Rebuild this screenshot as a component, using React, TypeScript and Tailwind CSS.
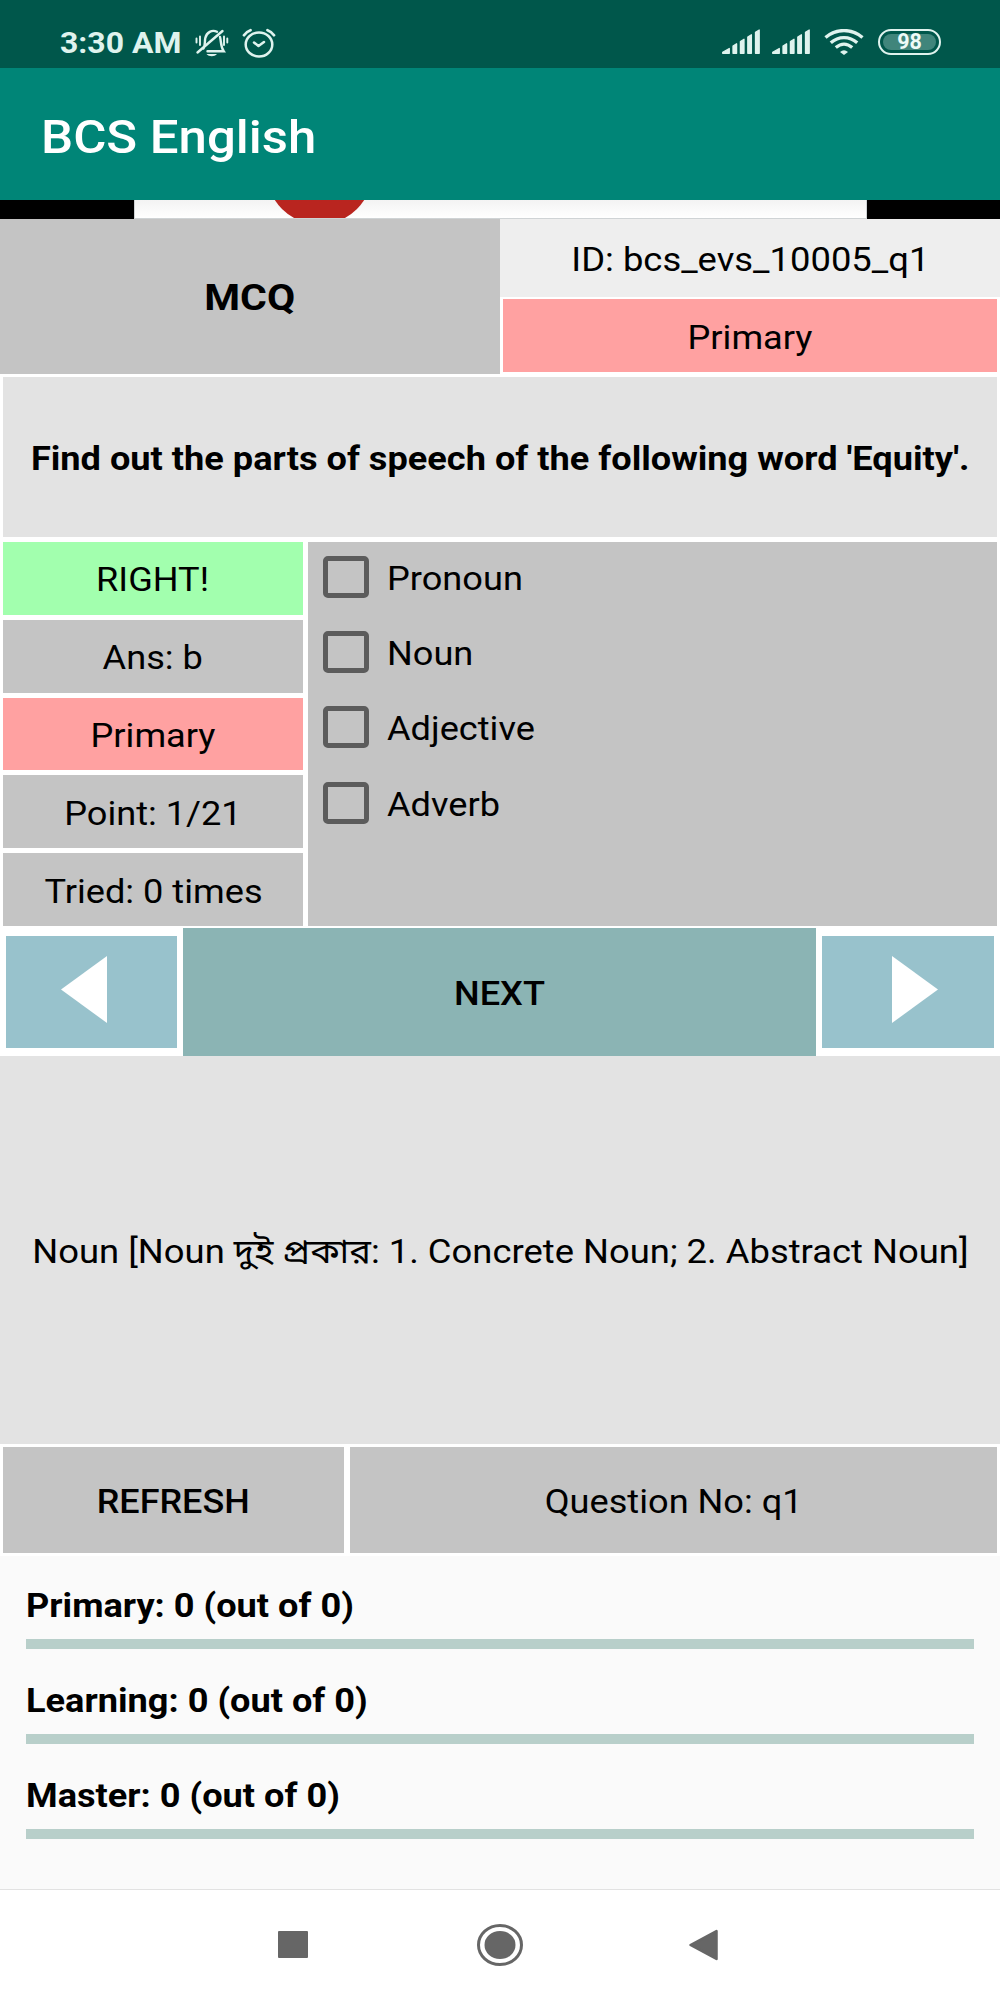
import type { ReactNode } from "react";

function T({
  children,
  className = "",
  stretch = "scale-x-[1.096]",
}: {
  children: ReactNode;
  className?: string;
  stretch?: string;
}) {
  return (
    <span className={`block whitespace-nowrap pt-[3px] leading-none ${stretch} ${className}`}>
      {children}
    </span>
  );
}

function BellOff() {
  return (
    <svg className="h-[30px] w-[34px] shrink-0" viewBox="0 0 34 30" fill="none" stroke="#dff3ee" strokeWidth="2.400" strokeLinecap="round">
      <path d="M8.500 20.500C10.500 17 9.500 13.500 10.300 10C11.500 4.500 17 1.200 22 3.800" />
      <path d="M25 9C26.300 13 25.300 18 28.800 23.300H12.500" />
      <path d="M2.500 24.500L27.500 3" />
      <path d="M1.500 10.500V14.500M5 8.500V17M32.300 10.500V14.500M29 8.500V17" strokeWidth="1.900" />
      <path d="M11.500 26C14 29 19.500 29 22 26Z" fill="#dff3ee" stroke="none" />
    </svg>
  );
}

function Alarm() {
  return (
    <svg className="h-[30px] w-[34px] shrink-0" viewBox="0 0 34 30" fill="none" stroke="#dff3ee" strokeWidth="2.500" strokeLinecap="round" strokeLinejoin="round">
      <ellipse cx="17" cy="16.500" rx="13.300" ry="12" />
      <path d="M12 14.500L16.500 18L22 14" />
      <path d="M2 7.200Q4.500 3.600 8.500 2.200M32 7.200Q29.500 3.600 25.500 2.200" strokeWidth="2.800" />
    </svg>
  );
}

function Signal() {
  return (
    <svg className="h-[26px] w-[38px] shrink-0" viewBox="0 0 38 26" fill="#dff3ee" stroke="#dff3ee" strokeWidth="1.300" strokeLinejoin="round">
      <path d="M.7 24.300V23.300L7.300 19.500V24.300Z" />
      <path d="M11 24.300V17L14.600 14.800V24.300Z" />
      <path d="M18.400 24.300V12.500L22 10.300V24.300Z" />
      <path d="M25.800 24.300V8L29.400 5.800V24.300Z" />
      <path d="M33.500 24.300V3.200L37.200 1V24.300Z" />
    </svg>
  );
}

function Wifi() {
  return (
    <svg className="h-[26px] w-[40px] shrink-0" viewBox="0 0 40 26" fill="none" stroke="#dff3ee" strokeWidth="3.300">
      <path d="M1.500 8.500C12 -.8 28 -.8 38.500 8.500" />
      <path d="M6.800 13.800C14.500 6.800 25.500 6.800 33.200 13.800" />
      <path d="M11.800 18.600C17 14.200 23 14.200 28.200 18.600" />
      <path d="M16 23Q20 19.400 24 23L20 26Z" fill="#dff3ee" stroke="none" />
    </svg>
  );
}

function StatusBar() {
  return (
    <div className="flex h-[68px] items-start bg-[#00574b] text-[#dff3ee]">
      <div className="ml-[60px] mt-[26px] w-[122px]">
        <T className="origin-left text-[29px] font-bold" stretch="scale-x-[1.102]">3:30 AM</T>
      </div>
      <div className="ml-[13px] mt-[28px] flex gap-[13px]">
        <BellOff />
        <Alarm />
      </div>
      <div className="ml-auto mr-[59px] mt-[29px] flex">
        <Signal />
        <div className="w-[12px]" />
        <Signal />
        <div className="w-[14px]" />
        <Wifi />
        <div className="ml-[14px] flex h-[26px] w-[63px] rounded-full border-2 border-[#dff3ee] p-[3px]">
          <div className="flex grow items-center justify-center rounded-full bg-[#40857b]">
            <span className="text-[21.500px] font-bold leading-none text-[#eefaf7]">98</span>
          </div>
        </div>
      </div>
    </div>
  );
}

function AdStrip() {
  return (
    <div className="h-[19px] bg-black pl-[134px] pr-[133px]">
      <div className="h-full border-x border-b border-[#cfd3d5] bg-gradient-to-b from-[#f3f3f3] to-white">
        <svg className="ml-[130px] block h-[18px] w-[120px]" viewBox="0 0 120 18">
          <circle cx="54.500" cy="-28.500" r="53" fill="#b9251f" />
        </svg>
      </div>
    </div>
  );
}

const stats = [
  { text: "RIGHT!", color: "bg-[#a2ffae]" },
  { text: "Ans: b", color: "bg-[#c4c4c4]" },
  { text: "Primary", color: "bg-[#ffa1a1]" },
  { text: "Point: 1/21", color: "bg-[#c4c4c4]" },
  { text: "Tried: 0 times", color: "bg-[#c4c4c4]" },
];

const options = ["Pronoun", "Noun", "Adjective", "Adverb"];
const progress = ["Primary: 0 (out of 0)", "Learning: 0 (out of 0)", "Master: 0 (out of 0)"];

export default function App() {
  return (
    <div className="flex h-[2000px] w-[1000px] flex-col overflow-hidden bg-white font-['Roboto','Noto_Sans_Bengali',sans-serif] text-[33px] text-black">
      <StatusBar />
      <header className="flex h-[132px] items-center bg-[#008577] pl-[41px] pt-[2px] text-white">
        <T className="origin-left text-[47px] font-medium" stretch="scale-x-[1.083]">BCS English</T>
      </header>
      <AdStrip />

      <section className="flex h-[155px]">
        <div className="flex w-[500px] items-center justify-center bg-[#c4c4c4]">
          <T className="text-[37.600px] font-bold" stretch="scale-x-[1.09]">MCQ</T>
        </div>
        <div className="flex w-[500px] flex-col">
          <div className="flex h-[78px] items-center justify-center bg-[#eeeeee]">
            <T stretch="scale-x-[1.103]">ID: bcs_evs_10005_q1</T>
          </div>
          <div className="mx-[3px] mt-[2px] flex h-[73px] items-center justify-center bg-[#ffa1a1]">
            <T>Primary</T>
          </div>
        </div>
      </section>

      <section className="mx-[3px] mt-[3px] flex h-[160px] items-center justify-center bg-[#e3e3e3]">
        <T className="font-bold">Find out the parts of speech of the following word 'Equity'.</T>
      </section>

      <section className="mx-[3px] mt-[5px] flex h-[384px] gap-[5px]">
        <div className="flex w-[300px] flex-col gap-[5px]">
          {stats.map((s) => (
            <div key={s.text} className={`flex flex-1 items-center justify-center ${s.color}`}>
              <T>{s.text}</T>
            </div>
          ))}
        </div>
        <div className="flex grow flex-col bg-[#c4c4c4] pl-[15px]">
          {options.map((o) => (
            <label key={o} className="flex h-[75.200px] items-center pb-[5px]">
              <span className="h-[42px] w-[46px] rounded-[5px] border-[5px] border-[#5c5c5c]" />
              <T className="ml-[18px] origin-left">{o}</T>
            </label>
          ))}
        </div>
      </section>

      <section className="mt-[2px] flex h-[128px]">
        <button className="my-2 ml-[6px] flex w-[171px] items-center bg-[#98c2cc] pl-[55px]">
          <svg className="-mt-[5px] h-[67px] w-[46px]" viewBox="0 0 46 67"><path d="M0 33.500L46 0V67Z" fill="white" /></svg>
        </button>
        <button className="ml-[6px] flex w-[633px] items-center justify-center bg-[#8bb4b4]">
          <T className="font-medium">NEXT</T>
        </button>
        <button className="my-2 ml-[6px] flex w-[172px] items-center bg-[#98c2cc] pl-[70px]">
          <svg className="-mt-[5px] h-[67px] w-[46px]" viewBox="0 0 46 67"><path d="M46 33.500L0 0V67Z" fill="white" /></svg>
        </button>
      </section>

      <section className="flex h-[388px] items-center justify-center bg-[#e3e3e3]">
        <T stretch="scale-x-[1.103]">Noun [Noun দুই প্রকার: 1. Concrete Noun; 2. Abstract Noun]</T>
      </section>

      <section className="mx-[3px] mt-[3px] flex h-[106px] gap-[6px]">
        <button className="flex w-[341px] items-center justify-center bg-[#c4c4c4]">
          <T className="font-medium" stretch="scale-x-[1.09]">REFRESH</T>
        </button>
        <div className="flex grow items-center justify-center bg-[#c4c4c4]">
          <T>Question No: q1</T>
        </div>
      </section>

      <section className="mt-[3px] h-[334px] border-b border-[#e2e2e2] bg-[#fafafa] px-[26px]">
        {progress.map((p) => (
          <div key={p} className="flex h-[95px] flex-col pt-[30px]">
            <T className="origin-left font-bold">{p}</T>
            <div className="mt-[17px] h-[10px] shrink-0 bg-[#b8cfca]" />
          </div>
        ))}
      </section>

      <nav className="flex grow items-start bg-white">
        <div className="ml-[278px] mt-[41px] h-[27px] w-[30px] rounded-[1px] bg-[#666666]" />
        <svg className="ml-[169px] mt-[34px] h-[42px] w-[46px]" viewBox="0 0 46 42">
          <ellipse cx="23" cy="21" rx="21.500" ry="19.500" fill="none" stroke="#666" strokeWidth="3" />
          <ellipse cx="23" cy="21" rx="15.500" ry="14" fill="#666" />
        </svg>
        <svg className="ml-[166px] mt-[39px] h-[32px] w-[30px]" viewBox="0 0 30 32">
          <path d="M1.500 16L27.500 2V30Z" fill="#666" stroke="#666" strokeWidth="2.500" strokeLinejoin="round" />
        </svg>
      </nav>
    </div>
  );
}
